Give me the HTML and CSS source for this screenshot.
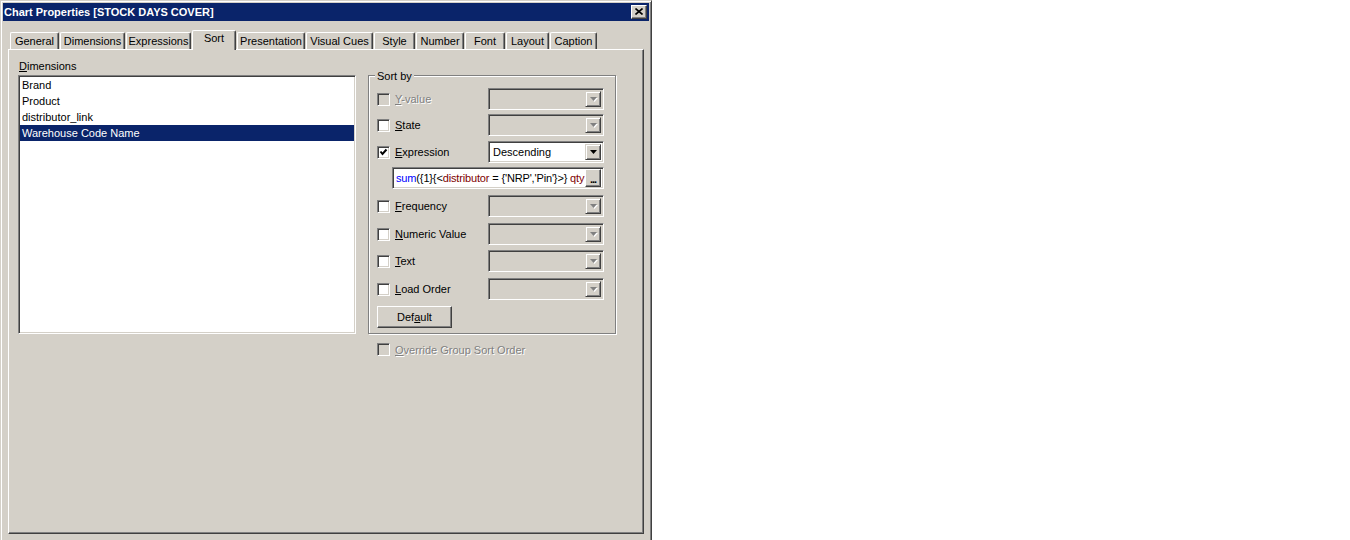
FILE: index.html
```html
<!DOCTYPE html>
<html lang="en">
<head>
  <meta charset="UTF-8" />
  <title>Chart Properties [STOCK DAYS COVER]</title>
  <link rel="stylesheet" href="styles.css">
</head>
<body>

  <div class="window">
    <div class="titlebar">
      <span class="title">Chart Properties [STOCK DAYS COVER]</span>
      <div class="close">
        <svg width="8" height="7" viewBox="0 0 8 7"><path d="M0.5 0.5L7.5 6.5M7.5 0.5L0.5 6.5" stroke="#000" stroke-width="1.6"/></svg>
      </div>
    </div>

    <div class="tabs">
      <div class="tab">General</div>
      <div class="tab">Dimensions</div>
      <div class="tab">Expressions</div>
      <div class="tab active">Sort</div>
      <div class="tab">Presentation</div>
      <div class="tab">Visual Cues</div>
      <div class="tab">Style</div>
      <div class="tab">Number</div>
      <div class="tab">Font</div>
      <div class="tab">Layout</div>
      <div class="tab">Caption</div>
    </div>

    <div class="panel">
      <div class="dims">
        <div class="label"><u>D</u>imensions</div>
        <div class="listbox">
          <div class="item">Brand</div>
          <div class="item">Product</div>
          <div class="item">distributor_link</div>
          <div class="item selected">Warehouse Code Name</div>
        </div>
      </div>

      <div class="sortcol">
        <div class="group">
          <span class="legend">Sort by</span>

          <div class="row r-y">
            <div class="opt disabled"><span class="check"></span><span><u>Y</u>-value</span></div>
            <div class="combo"><span class="value"></span><span class="arrow"><svg width="7" height="4" viewBox="0 0 7 4"><path d="M0 0h7L3.5 4z"/></svg></span></div>
          </div>
          <div class="row r-state">
            <div class="opt"><span class="check"></span><span><u>S</u>tate</span></div>
            <div class="combo"><span class="value"></span><span class="arrow"><svg width="7" height="4" viewBox="0 0 7 4"><path d="M0 0h7L3.5 4z"/></svg></span></div>
          </div>
          <div class="row r-expr">
            <div class="opt"><span class="check on"><svg width="9" height="9" viewBox="0 0 9 9"><path d="M1.5 3.5L3.5 6L7.5 1.5" stroke="#000" stroke-width="2" fill="none"/></svg></span><span><u>E</u>xpression</span></div>
            <div class="combo live"><span class="value">Descending</span><span class="arrow"><svg width="7" height="4" viewBox="0 0 7 4"><path d="M0 0h7L3.5 4z"/></svg></span></div>
          </div>
          <div class="row r-input">
            <div class="expr">
              <span class="code"><span class="fn">sum</span>({1}{&lt;<span class="fld">distributor</span> = {'NRP','Pin'}&gt;} <span class="fld">qty</span></span>
              <span class="dots">...</span>
            </div>
          </div>
          <div class="row r-freq">
            <div class="opt"><span class="check"></span><span><u>F</u>requency</span></div>
            <div class="combo"><span class="value"></span><span class="arrow"><svg width="7" height="4" viewBox="0 0 7 4"><path d="M0 0h7L3.5 4z"/></svg></span></div>
          </div>
          <div class="row r-num">
            <div class="opt"><span class="check"></span><span><u>N</u>umeric Value</span></div>
            <div class="combo"><span class="value"></span><span class="arrow"><svg width="7" height="4" viewBox="0 0 7 4"><path d="M0 0h7L3.5 4z"/></svg></span></div>
          </div>
          <div class="row r-text">
            <div class="opt"><span class="check"></span><span><u>T</u>ext</span></div>
            <div class="combo"><span class="value"></span><span class="arrow"><svg width="7" height="4" viewBox="0 0 7 4"><path d="M0 0h7L3.5 4z"/></svg></span></div>
          </div>
          <div class="row r-load">
            <div class="opt"><span class="check"></span><span><u>L</u>oad Order</span></div>
            <div class="combo"><span class="value"></span><span class="arrow"><svg width="7" height="4" viewBox="0 0 7 4"><path d="M0 0h7L3.5 4z"/></svg></span></div>
          </div>
          <div class="btn">Def<u>a</u>ult</div>
        </div>

        <div class="opt disabled override"><span class="check"></span><span><u>O</u>verride Group Sort Order</span></div>
      </div>
    </div>
  </div>

</body>
</html>
```

FILE: styles.css
```css
body {
  margin: 0;
  background: #fff;
  font-family: "Liberation Sans", Arial, sans-serif;
  font-size: 11px;
  color: #000;
  overflow: hidden;
}
u {
  text-decoration: underline;
  text-underline-offset: 1px;
}

.window {
  width: 652px;
  height: 560px;
  box-sizing: border-box;
  background: #d4d0c8;
  border: 1px solid;
  border-color: #d4d0c8 #404040 #404040 #d4d0c8;
  box-shadow: inset 1px 1px 0 #fff, inset -1px -1px 0 #808080;
  padding: 2px;
}

/* title bar */
.titlebar {
  height: 18px;
  background: #0a246a;
  color: #fff;
  display: flex;
  align-items: center;
  justify-content: space-between;
  padding: 0 2px 0 1px;
}
.title {
  font-weight: bold;
  font-size: 11px;
}
.close {
  width: 16px;
  height: 14px;
  box-sizing: border-box;
  background: #d4d0c8;
  border: 1px solid;
  border-color: #fff #404040 #404040 #fff;
  box-shadow: inset -1px -1px 0 #808080;
  display: flex;
  align-items: center;
  justify-content: center;
}
.close svg {
  display: block;
  margin: 0 1px 1px 0;
}

/* tabs */
.tabs {
  display: grid;
  grid-template-columns: 50px 66px 66px 45px 69px 68px 42px 49px 41px 44px 48px;
  align-items: end;
  height: 19px;
  margin: 9px 0 0 7px;
}
.tab {
  height: 17px;
  margin-right: 1px;
  box-sizing: border-box;
  border: 1px solid;
  border-color: #fff #404040 transparent #fff;
  border-bottom: none;
  border-radius: 2px 2px 0 0;
  box-shadow: inset -1px 0 0 #808080;
  line-height: 16px;
  text-align: center;
  white-space: nowrap;
}
.tab.active {
  height: 20px;
  margin-bottom: -1px;
  background: #d4d0c8;
  line-height: 15px;
  position: relative;
  z-index: 2;
}

/* tab page */
.panel {
  height: 485px;
  margin: 0 5px;
  box-sizing: border-box;
  border: 1px solid;
  border-color: #fff #404040 #404040 #fff;
  box-shadow: inset -1px -1px 0 #808080;
  display: grid;
  grid-template-columns: 338px 260px;
  column-gap: 12px;
  align-items: start;
  padding-left: 9px;
}
.label {
  line-height: 13px;
  margin: 10px 0 2px 1px;
}
.listbox {
  height: 259px;
  box-sizing: border-box;
  background: #fff;
  border: 1px solid;
  border-color: #808080 #fff #fff #808080;
  box-shadow: inset 1px 1px 0 #404040, inset -1px -1px 0 #d4d0c8;
  padding: 1px;
}
.item {
  line-height: 16px;
  padding-left: 2px;
  white-space: nowrap;
}
.item.selected {
  background: #0a246a;
  color: #fff;
}

/* sort by group */
.sortcol {
  margin-top: 25px;
}
.group {
  width: 248px;
  box-sizing: border-box;
  border: 1px solid #808080;
  box-shadow: 1px 1px 0 #fff, inset 1px 1px 0 #fff;
  padding: 0 0 5px 8px;
}
.legend {
  display: block;
  width: fit-content;
  line-height: 13px;
  margin: -6px 0 0 -2px;
  padding: 0 2px;
  background: #d4d0c8;
}
.row {
  display: flex;
  align-items: center;
  height: 22px;
  margin-top: 6px;
}
.r-y { margin-top: 5px; }
.r-state { margin-top: 4px; }
.r-expr { margin-top: 5px; }
.r-input { margin-top: 4px; }
.r-freq { margin-top: 6px; }
.r-text { margin-top: 5px; }

.opt {
  width: 111px;
  display: flex;
  align-items: center;
  gap: 5px;
  white-space: nowrap;
}
.check {
  width: 13px;
  height: 13px;
  box-sizing: border-box;
  flex: none;
  background: #fff;
  border: 1px solid;
  border-color: #808080 #fff #fff #808080;
  box-shadow: inset 1px 1px 0 #404040, inset -1px -1px 0 #d4d0c8;
  display: flex;
  align-items: center;
  justify-content: center;
}
.check svg {
  display: block;
}
.disabled {
  color: #808080;
  text-shadow: 1px 1px 0 #fff;
}
.disabled .check {
  background: #d4d0c8;
}

.combo {
  width: 116px;
  height: 22px;
  box-sizing: border-box;
  background: #d4d0c8;
  border: 1px solid;
  border-color: #808080 #fff #fff #808080;
  box-shadow: inset 1px 1px 0 #404040, inset -1px -1px 0 #d4d0c8;
  padding: 2px 2px 2px 3px;
  display: flex;
  justify-content: space-between;
}
.combo.live {
  background: #fff;
}
.combo .value {
  line-height: 16px;
  padding-left: 1px;
}
.arrow {
  width: 16px;
  height: 16px;
  box-sizing: border-box;
  background: #d4d0c8;
  border: 1px solid;
  border-color: #d4d0c8 #404040 #404040 #d4d0c8;
  box-shadow: inset 1px 1px 0 #fff, inset -1px -1px 0 #808080;
  display: flex;
  align-items: center;
  justify-content: center;
}
.arrow svg {
  display: block;
  fill: #808080;
  filter: drop-shadow(1px 1px 0 #fff);
  margin-left: 1px;
}
.combo.live .arrow svg {
  fill: #000;
  filter: none;
}

.expr {
  width: 212px;
  height: 22px;
  margin-left: 15px;
  box-sizing: border-box;
  background: #fff;
  border: 1px solid;
  border-color: #808080 #fff #fff #808080;
  box-shadow: inset 1px 1px 0 #404040, inset -1px -1px 0 #d4d0c8;
  padding: 2px;
  display: flex;
  align-items: center;
  overflow: hidden;
}
.code {
  flex: 1;
  overflow: hidden;
  white-space: nowrap;
  padding-left: 1px;
  letter-spacing: -0.15px;
}
.code .fn {
  color: #0000ff;
}
.code .fld {
  color: #800000;
}
.dots {
  width: 16px;
  height: 18px;
  flex: none;
  box-sizing: border-box;
  background: #d4d0c8;
  border: 1px solid;
  border-color: #fff #404040 #404040 #fff;
  box-shadow: inset -1px -1px 0 #808080;
  font-weight: bold;
  line-height: 18px;
  text-align: center;
  letter-spacing: -1px;
}

.btn {
  width: 75px;
  height: 22px;
  margin-top: 6px;
  box-sizing: border-box;
  border: 1px solid;
  border-color: #fff #404040 #404040 #fff;
  box-shadow: inset -1px -1px 0 #808080;
  line-height: 20px;
  text-align: center;
}

.override {
  width: auto;
  margin: 9px 0 0 9px;
}
```
